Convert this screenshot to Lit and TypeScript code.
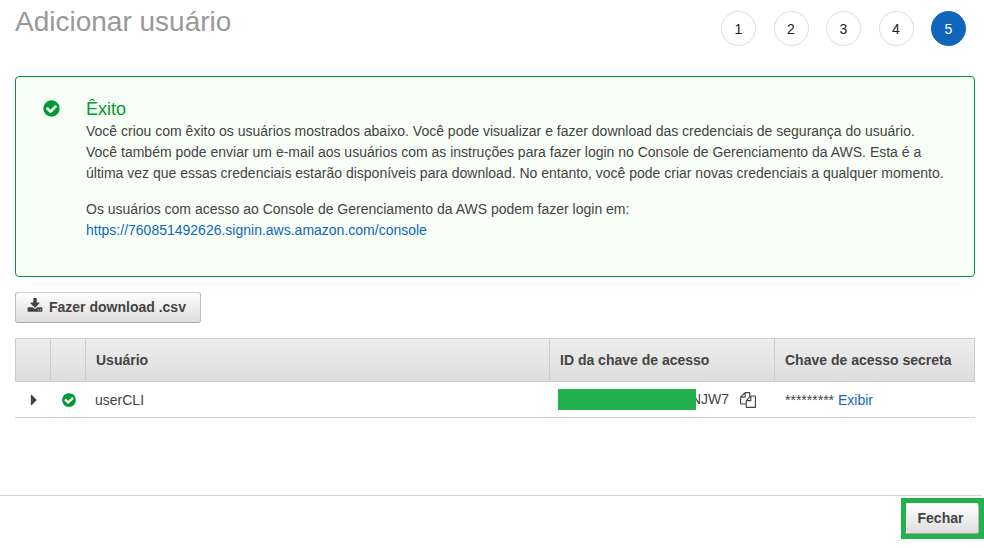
import { LitElement, html, css, svg } from "lit";
import { customElement, property } from "lit/decorators.js";
import { classMap } from "lit/directives/class-map.js";

const ICONS: Record<string, string> = {
  check:
    "M1412 734q0-28-18-46l-91-90q-19-19-45-19t-45 19l-408 407-226-226q-19-19-45-19t-45 19l-91 90q-18 18-18 46 0 27 18 45l362 362q19 19 45 19 27 0 46-19l543-543q18-18 18-45zm252 162q0 209-103 385.500t-279.500 279.500-385.500 103-385.500-103-279.500-279.500-103-385.500 103-385.500 279.500-279.500 385.500-103 385.500 103 279.500 279.500 103 385.500z",
  download:
    "M1344 1344q0-26-19-45t-45-19-45 19-19 45 19 45 45 19 45-19 19-45zm256 0q0-26-19-45t-45-19-45 19-19 45 19 45 45 19 45-19 19-45zm128-224v320q0 40-28 68t-68 28h-1472q-40 0-68-28t-28-68v-320q0-40 28-68t68-28h465l135 136q58 56 136 56t136-56l136-136h464q40 0 68 28t28 68zm-325-569q17 41-14 70l-448 448q-18 19-45 19t-45-19l-448-448q-31-29-14-70 17-39 59-39h256v-448q0-26 19-45t45-19h256q26 0 45 19t19 45v448h256q42 0 59 39z",
  copy: "M1696 384q40 0 68 28t28 68v1216q0 40-28 68t-68 28h-960q-40 0-68-28t-28-68v-288h-544q-40 0-68-28t-28-68v-672q0-40 20-88t48-76l408-408q28-28 76-48t88-20h416q40 0 68 28t28 68v328q68-40 128-40h416zm-544 213l-299 299h299v-299zm-640-384l-299 299h299v-299zm196 647l316-316v-416h-384v416q0 40-28 68t-68 28h-416v640h512v-256q0-40 20-88t48-76zm956 804v-1152h-384v416q0 40-28 68t-68 28h-416v640h896z",
  caret:
    "M1152 896q0 26-19 45l-448 448q-19 19-45 19t-45-19-19-45v-896q0-26 19-45t45-19 45 19l448 448q19 19 19 45z",
};

@customElement("ui-icon")
export class UiIcon extends LitElement {
  @property() name = "check";

  static styles = css`
    :host {
      display: block;
      width: 16px;
      height: 16px;
      flex: none;
    }
    svg {
      display: block;
      width: 100%;
      height: 100%;
      fill: currentColor;
    }
  `;

  render() {
    return html`<svg viewBox="0 0 1792 1792" aria-hidden="true">
      ${svg`<path d=${ICONS[this.name]}></path>`}
    </svg>`;
  }
}

@customElement("app-root")
export class AppRoot extends LitElement {
  private steps = [1, 2, 3, 4, 5];
  private current = 5;

  static styles = css`
    * {
      box-sizing: border-box;
    }
    :host {
      display: flex;
      flex-direction: column;
      height: 548px;
      overflow: hidden;
      background: #fff;
      color: #444;
      font: 14px/21px "Liberation Sans", Arial, sans-serif;
    }
    a {
      color: #1166bb;
      text-decoration: none;
    }
    .header {
      display: flex;
      justify-content: space-between;
      height: 76px;
      padding: 0 18px 0 15px;
    }
    h1 {
      margin: 6px 0 0;
      font-size: 28px;
      line-height: 32px;
      font-weight: 400;
      color: #999;
    }
    .steps {
      display: flex;
      gap: 17.5px;
      margin-top: 11px;
    }
    .step {
      display: flex;
      align-items: center;
      justify-content: center;
      width: 35px;
      height: 35px;
      padding-top: 1px;
      border: 1px solid #ddd;
      border-radius: 50%;
      color: #222;
    }
    .step.active {
      border-color: #1166bb;
      background: #1166bb;
      color: #fff;
    }
    .alert {
      display: flex;
      width: 960px;
      height: 201px;
      margin-left: 15px;
      padding: 21px 0 0 26px;
      border: 1px solid #093;
      border-radius: 4px;
      background: #f7fff7;
    }
    .alert ui-icon {
      width: 19px;
      height: 19px;
      margin: 1px 25px 0 0;
      color: #093;
    }
    h2 {
      margin: 0 0 1px;
      font-size: 18px;
      line-height: 22px;
      font-weight: 400;
      color: #093;
    }
    .alert p {
      margin: 0 0 15px;
      white-space: nowrap;
    }
    .button {
      display: flex;
      align-items: center;
      border: 1px solid #bbb;
      border-top-color: #ccc;
      border-bottom-color: #aaa;
      border-radius: 3px;
      background: linear-gradient(#fff, #ddd);
      color: #444;
      font: bold 14px/20px "Liberation Sans", Arial, sans-serif;
      white-space: nowrap;
    }
    .download {
      width: 186px;
      height: 31px;
      margin: 15px 0 15px 15px;
      padding: 0 0 2px 11px;
      gap: 6px;
    }
    .download ui-icon {
      margin-bottom: 2px;
    }
    .table {
      width: 960px;
      margin-left: 15px;
    }
    .row {
      display: grid;
      grid-template-columns: 35px 35px 464px 225px 201px;
      align-items: center;
    }
    .head {
      height: 44px;
      border: 1px solid #ccc;
      background: linear-gradient(#eee, #ddd);
      font-weight: 700;
    }
    .head div {
      display: flex;
      align-items: center;
      height: 42px;
      padding: 1px 0 0 10px;
      border-right: 1px solid #ccc;
    }
    .head div:last-child {
      border-right: 0;
    }
    .body {
      height: 36px;
      border-bottom: 1px solid #ccc;
    }
    .caret {
      width: 18px;
      height: 18px;
      margin-left: 10px;
    }
    .ok {
      margin-left: 11px;
      color: #093;
    }
    .user {
      padding: 2px 0 0 10px;
    }
    .key {
      position: relative;
      display: flex;
      align-items: center;
      justify-content: flex-end;
      gap: 11px;
      height: 21px;
      padding-right: 18px;
    }
    .mask {
      position: absolute;
      left: 9px;
      top: 0;
      width: 138px;
      height: 21px;
      background: #22b14c;
    }
    .secret {
      padding: 2px 0 0 11px;
    }
    .rule {
      width: 982px;
      height: 1px;
      margin-top: 77px;
      background: #d5d5d5;
    }
    .footer {
      display: flex;
      justify-content: flex-end;
      margin-top: 2px;
    }
    .highlight {
      width: 83px;
      height: 41px;
      padding: 5px;
      background: #22b14c;
    }
    .close {
      width: 73px;
      height: 31px;
      justify-content: center;
      padding: 0 4px 2px 0;
      border-color: #fff #bbb #aaa #f4f4f4;
      border-radius: 0 3px 3px 0;
    }
  `;

  render() {
    return html`
      <header class="header">
        <h1>Adicionar usuário</h1>
        <div class="steps">
          ${this.steps.map(
            (n) => html`<div class=${classMap({ step: true, active: n === this.current })}>${n}</div>`
          )}
        </div>
      </header>
      <section class="alert">
        <ui-icon name="check"></ui-icon>
        <div>
          <h2>Êxito</h2>
          <p>
            Você criou com êxito os usuários mostrados abaixo. Você pode visualizar e fazer download das credenciais de segurança do usuário.<br />
            Você também pode enviar um e-mail aos usuários com as instruções para fazer login no Console de Gerenciamento da AWS. Esta é a<br />
            última vez que essas credenciais estarão disponíveis para download. No entanto, você pode criar novas credenciais a qualquer momento.
          </p>
          <p>
            Os usuários com acesso ao Console de Gerenciamento da AWS podem fazer login em:<br />
            <a href="#">https://760851492626.signin.aws.amazon.com/console</a>
          </p>
        </div>
      </section>
      <button class="button download"><ui-icon name="download"></ui-icon>Fazer download .csv</button>
      <section class="table">
        <div class="row head">
          <div></div>
          <div></div>
          <div>Usuário</div>
          <div>ID da chave de acesso</div>
          <div>Chave de acesso secreta</div>
        </div>
        <div class="row body">
          <ui-icon class="caret" name="caret"></ui-icon>
          <ui-icon class="ok" name="check"></ui-icon>
          <div class="user">userCLI</div>
          <div class="key">
            <span>NJW7</span><ui-icon name="copy"></ui-icon>
            <div class="mask"></div>
          </div>
          <div class="secret">********* <a href="#">Exibir</a></div>
        </div>
      </section>
      <div class="rule"></div>
      <footer class="footer">
        <div class="highlight"><button class="button close">Fechar</button></div>
      </footer>
    `;
  }
}
